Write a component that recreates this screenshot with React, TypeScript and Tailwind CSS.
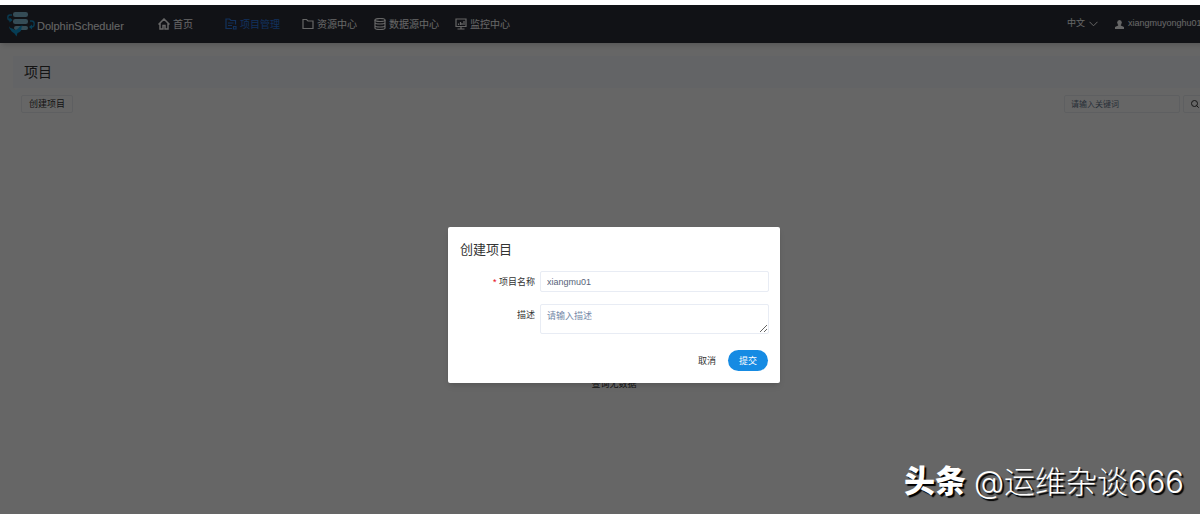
import type { ReactNode } from 'react';

function Logo() {
  return (
    <svg width="28" height="26" viewBox="0 0 28 26" fill="none" aria-hidden="true">
      <g fill="#86bdd6">
        <rect x="6" y="1" width="15" height="5" rx="2.2" />
        <rect x="6" y="8" width="15" height="5" rx="2.2" />
        <rect x="7" y="15" width="14" height="4" rx="2" />
      </g>
      <g stroke="#178fc6" strokeWidth="1.4">
        <path d="M5 4H3C1.400 4 .8 5 .8 6.500S1.500 9 3 9h1.500" />
        <path d="M23 10h1.500c2 0 2.700 1.200 2.700 2.700S26.300 16 24.500 16H23" />
      </g>
      <path
        d="M2 15c.5 1.500 1.500 2 3 2.500 1.500.3 2 .8 2.300 1.500 2.500-.2 4-1.300 5.200-3.200.5-.8 2-1.300 3.500-1-1 .5-1.500 1-1.500 2 .3 2.700-1.500 4.700-4 5.200L9.500 25.500 7.500 22.500C6 21.700 4.500 20.800 3.800 19 2.700 18 2 16.700 2 15zM2.500 6.500 5.500 9l-3 2.500zM25 13.500 22 16l3 2.500z"
        fill="#1199d5"
      />
    </svg>
  );
}

function Icon({ children }: { children: ReactNode }) {
  return (
    <svg
      width="12"
      height="12"
      viewBox="0 0 24 24"
      fill="none"
      stroke="currentColor"
      strokeWidth="2.4"
      aria-hidden="true"
    >
      {children}
    </svg>
  );
}

const menus = [
  {
    label: '首页',
    className: 'w-[67px] text-white',
    icon: <path strokeWidth="3" d="M1 13 12 2l11 11M4 11v11h6v-7h4v7h6V11" />,
  },
  {
    label: '项目管理',
    className: 'w-[77px] text-[#2d7be5]',
    icon: <path d="M21 13V5h-9L9 2H2v19h12M6 10h11M6 15h8M17 17h5v5h-5z" />,
  },
  {
    label: '资源中心',
    className: 'w-[72px] text-white',
    icon: <path d="M2 3h7l3 3h10v15H2z" />,
  },
  {
    label: '数据源中心',
    className: 'w-[81px] text-white',
    icon: (
      <>
        <ellipse cx="12" cy="4" rx="10" ry="3" />
        <path d="M2 4v16c0 4 20 4 20 0V4M2 9c0 4 20 4 20 0M2 15c0 4 20 4 20 0" />
      </>
    ),
  },
  {
    label: '监控中心',
    className: 'text-white',
    icon: <path d="M2 2h20v15H2zM5 22h14M12 17v5M7 14v-3M11 14V8M14 14v-4M18 14V6" />,
  },
];

function Header() {
  return (
    <header className="flex h-[38px] items-center bg-[#2c2f39] pl-[7px] text-[10px] text-white shadow-md">
      <div className="flex w-[151px] items-center gap-0.5">
        <Logo />
        <span className="pt-1 text-[11px]">DolphinScheduler</span>
      </div>
      <nav className="flex flex-1">
        {menus.map((m) => (
          <a
            key={m.label}
            href="#"
            className={`flex items-center gap-[3px] whitespace-nowrap ${m.className}`}
          >
            <Icon>{m.icon}</Icon>
            {m.label}
          </a>
        ))}
      </nav>
      <button className="mr-[17px] flex items-center gap-1 text-[9px]">
        中文
        <svg width="9" height="6" viewBox="0 0 9 6" fill="none" stroke="currentColor">
          <path d="m.5 .8 4 4 4-4" />
        </svg>
      </button>
      <button className="flex w-[113px] items-center gap-1 text-[9px]">
        <svg width="9" height="9" viewBox="0 0 9 9" fill="currentColor" aria-hidden="true">
          <ellipse cx="4.5" cy="2.5" rx="2.3" ry="2.5" />
          <path d="M3.200 4h2.600v1.500L9 7v2H0V7l3.200-1.500z" />
        </svg>
        xiangmuyonghu01
      </button>
    </header>
  );
}

function ProjectDialog() {
  return (
    <form
      role="dialog"
      aria-labelledby="dialog-title"
      className="w-[332px] rounded-xs bg-white p-3 pr-[11px] text-[9px] text-[#333] shadow-md"
      onSubmit={(e) => e.preventDefault()}
    >
      <h2 id="dialog-title" className="text-[13px] leading-[22px]">
        创建项目
      </h2>
      <div className="mt-[10px] flex items-center gap-[5px]">
        <label htmlFor="name" className="w-[75px] pt-0.5 text-right">
          <span className="text-red-600">*</span> 项目名称
        </label>
        <input
          id="name"
          defaultValue="xiangmu01"
          className="h-[21px] flex-1 rounded-xs border border-[#e8ecf4] px-1.5 text-[#576379] outline-none"
        />
      </div>
      <div className="mt-3 flex gap-[5px]">
        <label htmlFor="desc" className="w-[75px] pt-[5px] text-right">
          描述
        </label>
        <textarea
          id="desc"
          placeholder="请输入描述"
          className="h-[30px] flex-1 rounded-xs border border-[#e8ecf4] px-1.5 py-[5px] outline-none placeholder:text-[#7488a8]"
        />
      </div>
      <div className="mt-4 flex justify-end gap-3 pr-px">
        <button type="button" className="pt-0.5">
          取消
        </button>
        <button type="submit" className="h-[21px] w-10 rounded-full bg-[#168be3] pt-0.5 text-white">
          提交
        </button>
      </div>
    </form>
  );
}

export default function App() {
  return (
    <div className="min-h-screen overflow-hidden bg-white pt-[5px] font-['Liberation_Sans','Noto_Sans_CJK_SC',sans-serif]">
      <div className="relative -mr-7 min-h-[calc(100vh-5px)]">
        <Header />
        <main className="px-[13px] pt-[13px] text-[9px] text-[#333]">
          <h1 className="bg-[#f7faff] px-[11px] text-[14px] leading-[32px]">项目</h1>
          <div className="mt-[7px] flex justify-between px-2">
            <button className="h-[18px] w-[52px] rounded-xs border border-[#eceef2] pt-0.5">
              创建项目
            </button>
            <div className="flex gap-[3px]">
              <input
                aria-label="关键词"
                placeholder="请输入关键词"
                className="h-[18px] w-[116px] rounded-xs border border-[#eceef2] px-1.5 text-[8px] placeholder:text-[#66758c]"
              />
              <button
                aria-label="搜索"
                className="flex h-[18px] w-6 items-center justify-center rounded-xs border border-[#eceef2]"
              >
                <svg width="8" height="8" viewBox="0 0 8 8" fill="none" stroke="currentColor">
                  <circle cx="3.5" cy="3.5" r="3" />
                  <path d="m5.5 5.5 2.2 2.2" />
                </svg>
              </button>
            </div>
          </div>
          <p className="pt-[264px] text-center leading-[14px]">查询无数据</p>
        </main>
        <div className="absolute inset-0 flex items-start justify-center bg-black/60 pt-[222px]">
          <ProjectDialog />
        </div>
      </div>
      <div className="absolute right-4 bottom-3 flex items-center gap-2 text-[31px] leading-[40px] text-white [text-shadow:2px_2px_1px_#000]">
        <span className="font-black">头条</span>
        <span className="font-['Inter','Noto_Sans_CJK_SC',sans-serif] font-light">@运维杂谈666</span>
      </div>
    </div>
  );
}
